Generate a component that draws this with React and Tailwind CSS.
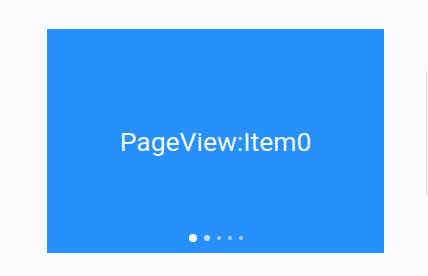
const dots = [
  "size-2 bg-white",
  "size-1.5 bg-white/70",
  "size-1 bg-white/60",
  "size-1 bg-white/60",
  "size-1 bg-white/60",
];

export default function App() {
  return (
    <div className="flex h-[276px] w-[428px] bg-[#fafbfe] pl-[47px] pt-[29px] font-['Roboto',sans-serif]">
      <div className="flex h-[224px] w-[337px] flex-col bg-[#2790fe]">
        <div className="flex flex-1 items-center justify-center pt-[20px] text-[26.5px] text-white/95">
          PageView:Item0
        </div>
        <div className="flex items-center justify-center gap-[7px] pb-[11px]">
          {dots.map((cls, index) => (
            <span key={index} className={`rounded-full ${cls}`} />
          ))}
        </div>
      </div>
      <div className="ml-auto mr-[1px] mt-[42px] h-[125px] w-px bg-[#d9d9e8]" />
    </div>
  );
}
